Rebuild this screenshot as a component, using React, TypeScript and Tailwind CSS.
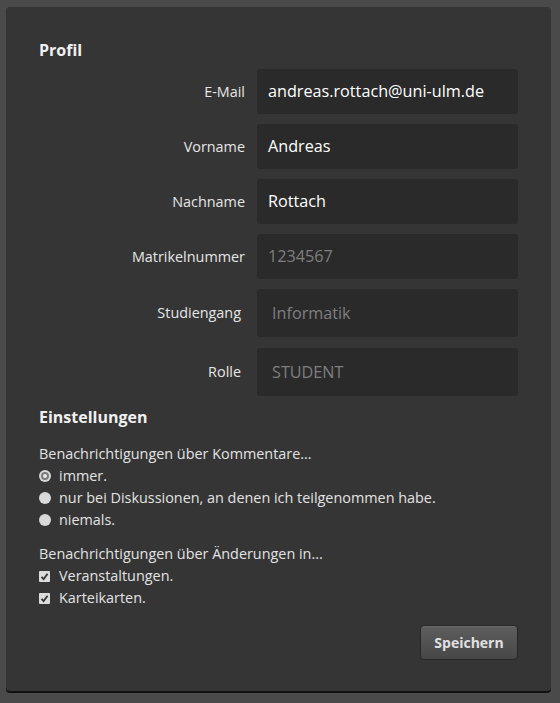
import React from "react";

const font = { fontFamily: '"Open Sans", "Noto Sans", sans-serif' };

function Row({ label, value, muted, tall, labelPr }: { label: string; value: string; muted?: boolean; tall?: boolean; labelPr?: boolean }) {
  return (
    <div className="flex items-center">
      <div className={`w-[218px] shrink-0 text-right text-[14.4px] text-[#e6e6e6] ${labelPr ? "pr-[16px]" : "pr-[12px]"}`}>{label}</div>
      <div
        className={`w-[261px] rounded-[3px] bg-[#2a2a2a] flex items-center text-[16.2px] ${tall ? "h-[48px] pl-[15px]" : "h-[45px] pl-[11px]"} ${muted ? "text-[#7f7f7f]" : "text-white"}`}
      >
        {value}
      </div>
    </div>
  );
}

function Radio({ checked, label }: { checked?: boolean; label: string }) {
  return (
    <div className="flex items-center h-[22px]">
      <span className="w-[12px] h-[12px] rounded-full bg-[#d9d9d9] flex items-center justify-center mr-[8px]">
        {checked && <span className="w-[8px] h-[8px] rounded-full border-[2px] border-[#7a7a7a] bg-[#e8e8e8]" />}
      </span>
      <span>{label}</span>
    </div>
  );
}

function Check({ label }: { label: string }) {
  return (
    <div className="flex items-center h-[22px]">
      <span className="w-[11px] h-[11px] rounded-[1px] bg-[#dcdcdc] flex items-center justify-center mr-[9px]">
        <svg width="9" height="9" viewBox="0 0 9 9">
          <path d="M1.5 4.8 L3.6 7 L7.6 1.8" stroke="#333" strokeWidth="1.8" fill="none" />
        </svg>
      </span>
      <span>{label}</span>
    </div>
  );
}

export default function App() {
  return (
    <div className="w-[560px] h-[703px] bg-[#4a4a4a] pt-[7px] pl-[6px] pr-[9px]" style={font}>
      <div className="bg-[#353535] rounded-[4px] shadow-[0_2px_0_#111] pt-[32px] px-[33px] pb-[31px] text-[#e3e3e3]">
        <h2 className="text-[16px] font-bold text-[#f0f0f0] leading-[22px]">Profil</h2>
        <div className="mt-[8px] flex flex-col gap-[10px]">
          <Row label="E-Mail" value="andreas.rottach@uni-ulm.de" />
          <Row label="Vorname" value="Andreas" />
          <Row label="Nachname" value="Rottach" />
          <Row label="Matrikelnummer" value="1234567" muted />
          <Row label="Studiengang" value="Informatik" muted tall labelPr />
          <div className="mt-[1px]">
            <Row label="Rolle" value="STUDENT" muted tall labelPr />
          </div>
        </div>
        <h2 className="mt-[10px] text-[16px] font-bold text-[#f0f0f0] leading-[22px]">Einstellungen</h2>
        <div className="mt-[15px] text-[14.4px] leading-[22px]">
          <div className="h-[22px]">Benachrichtigungen über Kommentare...</div>
          <Radio checked label="immer." />
          <Radio label="nur bei Diskussionen, an denen ich teilgenommen habe." />
          <Radio label="niemals." />
          <div className="h-[22px] mt-[12px]">Benachrichtigungen über Änderungen in...</div>
          <Check label="Veranstaltungen." />
          <Check label="Karteikarten." />
        </div>
        <div className="flex justify-end mt-[16px]">
          <button className="w-[98px] h-[35px] rounded-[4px] border border-[#262626] bg-gradient-to-b from-[#5e5e5e] to-[#474747] text-[14px] font-bold text-[#e0e0e0] shadow-[inset_0_1px_0_#6a6a6a]">
            Speichern
          </button>
        </div>
      </div>
    </div>
  );
}
